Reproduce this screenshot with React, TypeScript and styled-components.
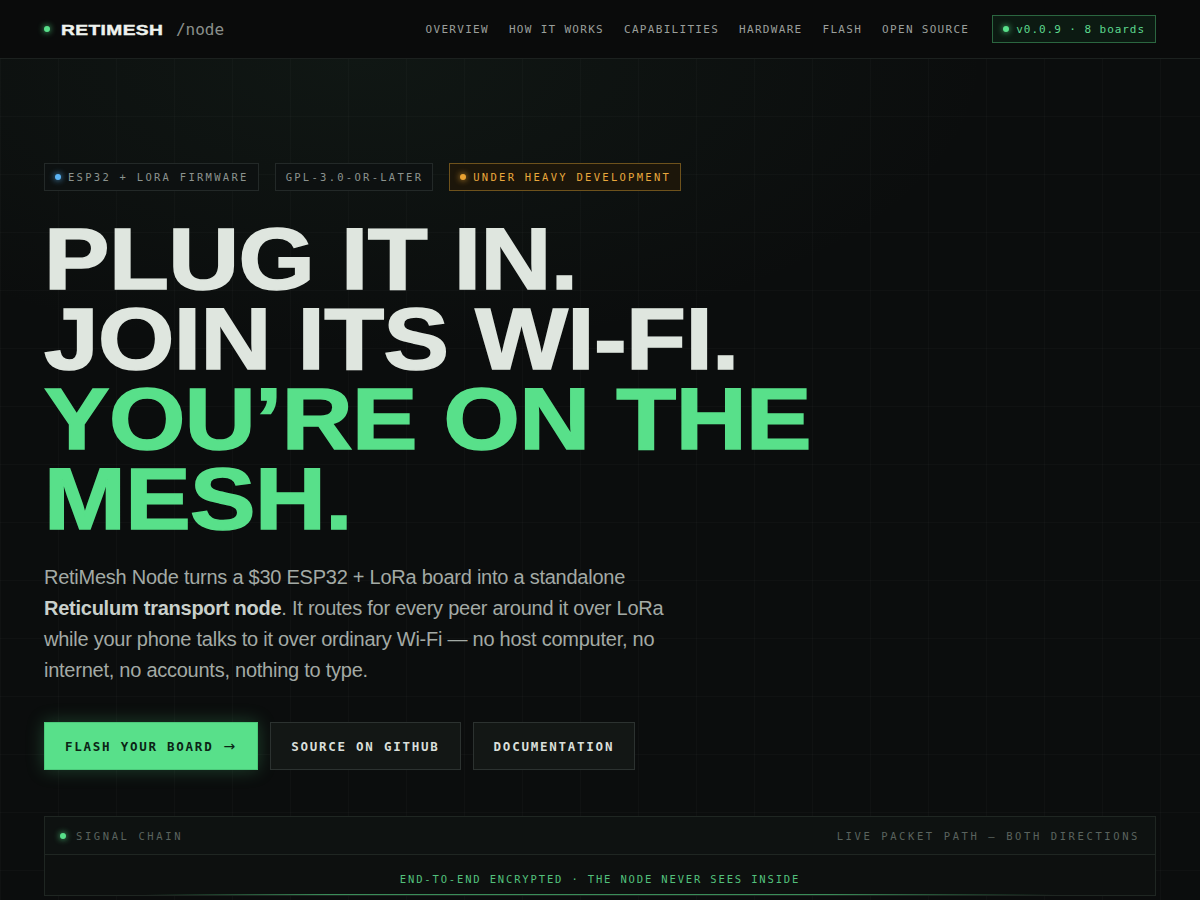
import React from "react";
import styled, { createGlobalStyle } from "styled-components";

const Global = createGlobalStyle`
  html, body { margin: 0; padding: 0; background: #0a0b0b; }
  body { font-family: "Liberation Sans", Arial, sans-serif; color: #dfe6df; }
  * { box-sizing: border-box; }
`;

const MONO = `"DejaVu Sans Mono", "Liberation Mono", monospace`;

const Page = styled.div`
  width: 1200px;
  height: 900px;
  overflow: hidden;
  background-color: #0a0b0b;
  display: flex;
  flex-direction: column;
`;

const Nav = styled.header`
  height: 59px;
  flex: none;
  display: flex;
  align-items: center;
  justify-content: space-between;
  padding: 0 44px;
  background: #0a0b0b;
  border-bottom: 1px solid #1c211f;
`;

const Brand = styled.div`
  display: flex;
  align-items: center;
`;

const Dot = styled.span<{ $c: string; $size?: number }>`
  display: inline-block;
  width: ${(p) => p.$size ?? 6}px;
  height: ${(p) => p.$size ?? 6}px;
  border-radius: 50%;
  background: ${(p) => p.$c};
  box-shadow: 0 0 6px ${(p) => p.$c};
  flex: none;
`;

const BrandName = styled.span`
  font-family: "Liberation Sans", Arial, sans-serif;
  font-weight: 700;
  font-size: 15px;
  letter-spacing: 0.3px;
  color: #eef2ee;
  margin-left: 11px;
  display: inline-block;
  transform: scaleX(1.28);
  transform-origin: left center;
  -webkit-text-stroke: 0.4px currentColor;
`;

const BrandSub = styled.span`
  font-family: ${MONO};
  font-size: 16px;
  color: #8a908b;
  margin-left: 35px;
`;

const NavRight = styled.nav`
  display: flex;
  align-items: center;
`;

const NavLink = styled.a`
  font-family: ${MONO};
  font-size: 11px;
  letter-spacing: 1.3px;
  color: #9a9f9b;
  text-decoration: none;
  margin-right: 20px;
  &:last-of-type {
    margin-right: 23px;
  }
`;

const Version = styled.div`
  display: flex;
  align-items: center;
  gap: 7px;
  height: 28px;
  padding: 0 10px;
  border: 1px solid #2b6640;
  background: #0c1a12;
  font-family: ${MONO};
  font-size: 11px;
  letter-spacing: 0.95px;
  color: #5cd88e;
`;

const Hero = styled.main`
  flex: 1;
  padding: 104px 44px 0;
  background-color: #0b0d0d;
  background-image: radial-gradient(
      ellipse 900px 420px at 30% 0%,
      rgba(60, 110, 80, 0.1),
      rgba(0, 0, 0, 0) 70%
    ),
    linear-gradient(rgba(255, 255, 255, 0.018) 1px, transparent 1px),
    linear-gradient(90deg, rgba(255, 255, 255, 0.018) 1px, transparent 1px);
  background-size: 100% 100%, 58px 58px, 58px 58px;
  background-position: 0 0, 0 -1px, 0 0;
`;

const Tags = styled.div`
  display: flex;
  gap: 16px;
`;

const Tag = styled.span<{ $tone?: "warn" }>`
  display: inline-flex;
  align-items: center;
  gap: 7px;
  height: 28px;
  padding: 0 9px 0 10px;
  border: 1px solid ${(p) => (p.$tone === "warn" ? "#6e521c" : "#232928")};
  background: ${(p) => (p.$tone === "warn" ? "#1c160a" : "#0d1111")};
  font-family: ${MONO};
  font-size: 10.5px;
  letter-spacing: 2.28px;
  color: ${(p) => (p.$tone === "warn" ? "#e9a83c" : "#8c938e")};
`;

const Headline = styled.h1`
  margin: 28px 0 0;
  font-family: "Liberation Sans", Arial, sans-serif;
  font-weight: 700;
  font-size: 88px;
  line-height: 80px;
  letter-spacing: -0.5px;
`;

const HLine = styled.span<{ $green?: boolean }>`
  display: block;
  width: max-content;
  color: ${(p) => (p.$green ? "#58e08a" : "#dfe6df")};
  -webkit-text-stroke: 1.6px currentColor;
  transform: scaleX(1.115);
  transform-origin: left center;
`;

const Lead = styled.p`
  margin: 23px 0 0;
  max-width: 640px;
  font-size: 20px;
  line-height: 31px;
  color: #a3aaa5;
  letter-spacing: -0.25px;
  b {
    color: #c9d0cb;
    font-weight: 700;
  }
`;

const Actions = styled.div`
  display: flex;
  gap: 12px;
  margin-top: 36px;
`;

const Button = styled.a<{ $primary?: boolean }>`
  display: inline-flex;
  align-items: center;
  gap: 10px;
  height: 48px;
  padding: 0 20px 0 20px;
  font-family: ${MONO};
  font-weight: 700;
  font-size: 12.5px;
  letter-spacing: 1.75px;
  text-decoration: none;
  color: ${(p) => (p.$primary ? "#0b2415" : "#d9dfda")};
  background: ${(p) => (p.$primary ? "#58e08a" : "#131715")};
  border: 1px solid ${(p) => (p.$primary ? "#4cc97a" : "#2c3230")};
  box-shadow: ${(p) => (p.$primary ? "0 0 18px rgba(88,224,138,0.25)" : "none")};
`;

const Arrow = styled.span`
  font-family: "DejaVu Sans", sans-serif;
  font-weight: 400;
  font-size: 14px;
  letter-spacing: 0;
  margin-right: 2px;
`;

const Panel = styled.section`
  margin-top: 46px;
  border: 1px solid #1f2622;
  background: #0d100f;
`;

const PanelHead = styled.div`
  height: 38px;
  display: flex;
  align-items: center;
  justify-content: space-between;
  padding: 0 15px;
  border-bottom: 1px solid #1f2622;
  background: #0e1211;
  font-family: ${MONO};
  font-size: 10.5px;
  letter-spacing: 2.6px;
  color: #5a635e;
`;

const PanelTitle = styled.span`
  display: flex;
  align-items: center;
  gap: 10px;
`;

const PanelBody = styled.div`
  padding: 18px 0 0;
  display: flex;
  flex-direction: column;
  align-items: center;
`;

const Encrypted = styled.div`
  font-family: ${MONO};
  font-size: 10.5px;
  letter-spacing: 1.85px;
  color: #52c07c;
`;

const Beam = styled.div`
  margin-top: 9px;
  width: 910px;
  height: 1px;
  background: linear-gradient(
    90deg,
    rgba(88, 224, 138, 0),
    rgba(88, 224, 138, 0.6) 20%,
    rgba(88, 224, 138, 0.6) 75%,
    rgba(88, 224, 138, 0)
  );
`;

export default function App() {
  return (
    <>
      <Global />
      <Page>
        <Nav>
          <Brand>
            <Dot $c="#58e08a" />
            <BrandName>RETIMESH</BrandName>
            <BrandSub>/node</BrandSub>
          </Brand>
          <NavRight>
            <NavLink>OVERVIEW</NavLink>
            <NavLink>HOW IT WORKS</NavLink>
            <NavLink>CAPABILITIES</NavLink>
            <NavLink>HARDWARE</NavLink>
            <NavLink>FLASH</NavLink>
            <NavLink>OPEN SOURCE</NavLink>
            <Version>
              <Dot $c="#58e08a" />
              v0.0.9 · 8 boards
            </Version>
          </NavRight>
        </Nav>
        <Hero>
          <Tags>
            <Tag>
              <Dot $c="#5bb4f5" />
              ESP32 + LORA FIRMWARE
            </Tag>
            <Tag>GPL-3.0-OR-LATER</Tag>
            <Tag $tone="warn">
              <Dot $c="#eaa232" />
              UNDER HEAVY DEVELOPMENT
            </Tag>
          </Tags>
          <Headline>
            <HLine>PLUG IT IN.</HLine>
            <HLine>JOIN ITS WI-FI.</HLine>
            <HLine $green>YOU’RE ON THE</HLine>
            <HLine $green>MESH.</HLine>
          </Headline>
          <Lead>
            RetiMesh Node turns a $30 ESP32 + LoRa board into a standalone{" "}
            <b>Reticulum transport node</b>. It routes for every peer around it over LoRa
            while your phone talks to it over ordinary Wi-Fi — no host computer, no
            internet, no accounts, nothing to type.
          </Lead>
          <Actions>
            <Button $primary>
              FLASH YOUR BOARD <Arrow>→</Arrow>
            </Button>
            <Button>SOURCE ON GITHUB</Button>
            <Button>DOCUMENTATION</Button>
          </Actions>
          <Panel>
            <PanelHead>
              <PanelTitle>
                <Dot $c="#58e08a" />
                SIGNAL CHAIN
              </PanelTitle>
              <span>LIVE PACKET PATH — BOTH DIRECTIONS</span>
            </PanelHead>
            <PanelBody>
              <Encrypted>END-TO-END ENCRYPTED · THE NODE NEVER SEES INSIDE</Encrypted>
              <Beam />
            </PanelBody>
          </Panel>
        </Hero>
      </Page>
    </>
  );
}
